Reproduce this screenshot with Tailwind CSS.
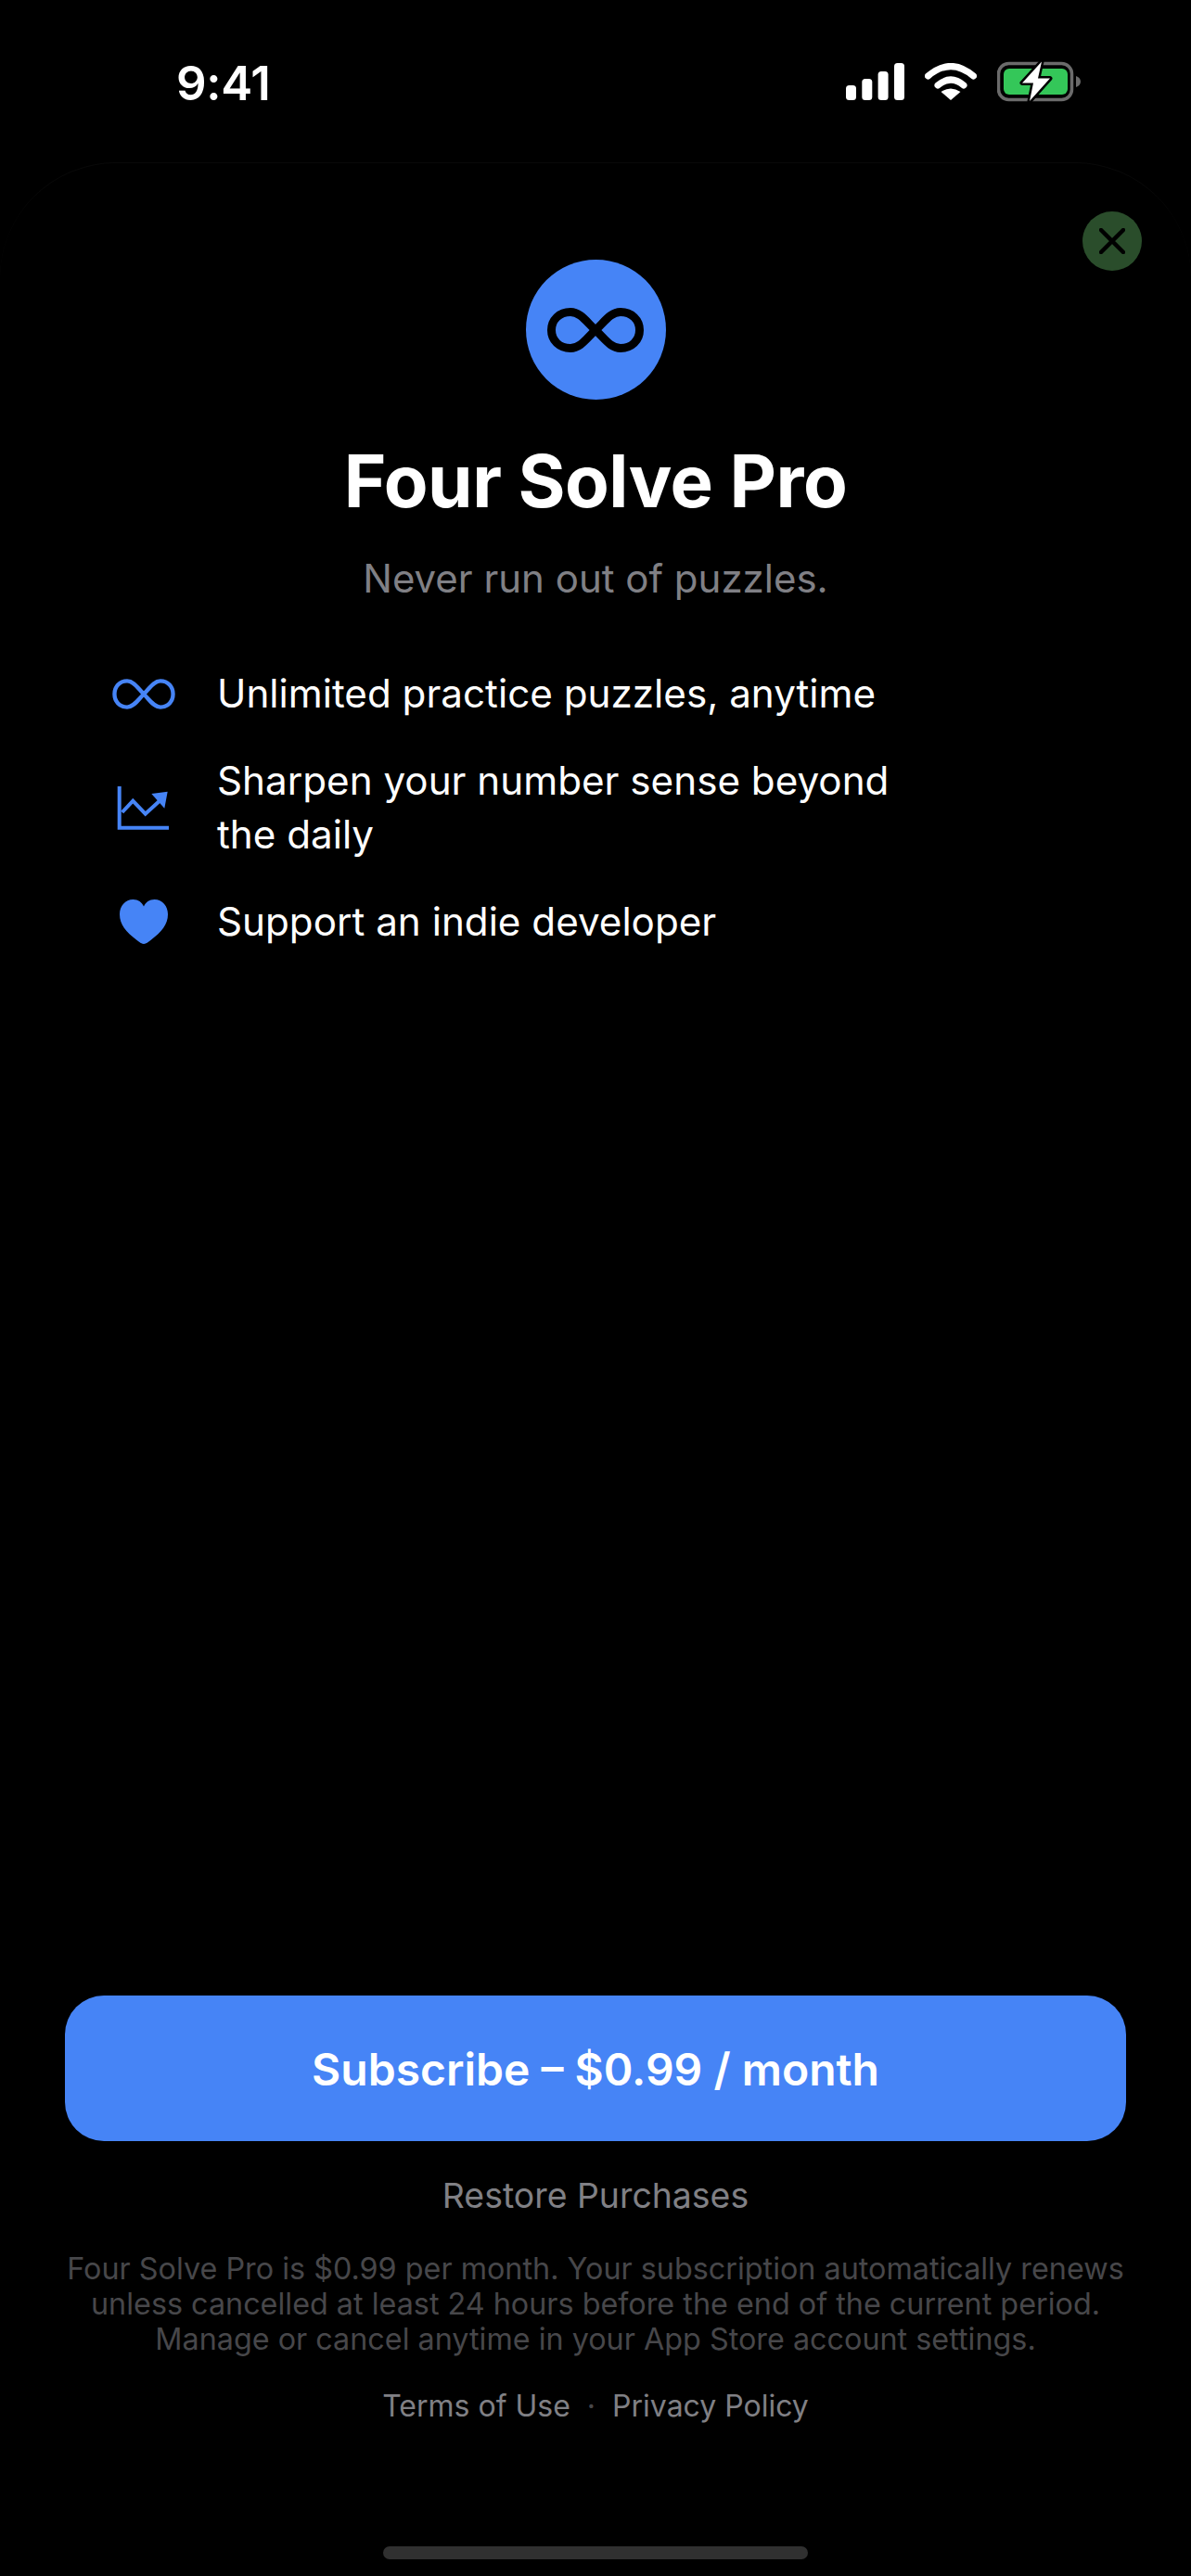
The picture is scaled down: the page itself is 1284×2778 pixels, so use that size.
<!DOCTYPE html>
<html lang="en">
<head>
  <meta charset="UTF-8">
  <meta name="viewport" content="width=device-width, initial-scale=1.0">
  <title>Four Solve Pro</title>
  <script src="https://cdn.jsdelivr.net/npm/@tailwindcss/browser@4"></script>
</head>
<body class="bg-black text-white font-['Inter',sans-serif]">
  <div class="w-[1284px] h-[2778px] flex flex-col overflow-hidden">
    <!-- Status bar -->
    <header class="h-[175px] shrink-0 flex justify-between items-start pl-[190px] pr-[119px] pt-[62px]">
      <span class="text-[51px] leading-[56px] font-semibold tracking-[-0.3px]">9:41</span>
      <div class="flex items-start gap-[22px] pt-[6px]">
        <svg class="w-[63px] h-[40px]" viewBox="0 0 63 40" fill="#fff">
          <rect x="0" y="24" width="11" height="16" rx="3.500"/>
          <rect x="17.300" y="17" width="11" height="23" rx="3.500"/>
          <rect x="34.600" y="9" width="11" height="31" rx="3.500"/>
          <rect x="52" y="0" width="11" height="40" rx="3.500"/>
        </svg>
        <svg class="w-[56px] h-[40px]" viewBox="0 0 56 40" fill="none" stroke="#fff" stroke-width="7" stroke-linecap="round">
          <path d="M3.500 14 Q28 -7 52.500 14"/>
          <path d="M14 24 Q28 12 42 24"/>
          <path d="M28 40 L17.500 31 Q28 24 38.500 31 Z" fill="#fff" stroke="none"/>
        </svg>
        <svg class="w-[90px] h-[46px] -mt-[3px]" viewBox="0 0 90 46" fill="none">
          <rect x="1.500" y="3.500" width="79" height="39" rx="11" stroke="#6b6b6b" stroke-width="3.500"/>
          <rect x="7" y="9" width="69" height="28" rx="6" fill="#34c759"/>
          <path d="M85 17 c3 1 5 3 5 6 s-2 5 -5 6 Z" fill="#6b6b6b"/>
          <path d="M48 1.500 L27 24.500 L39 24.500 L35 44 L57 19.500 L44 19.500 Z" fill="#fff" stroke="#000" stroke-width="5" stroke-linejoin="round" paint-order="stroke"/>
        </svg>
      </div>
    </header>

    <!-- Sheet -->
    <main class="relative flex-1 flex flex-col rounded-t-[125px] border-t border-[#090909]">
      <button class="absolute top-[52px] right-[53px] w-[64px] h-[64px] rounded-full bg-[#2a4d2b] flex items-center justify-center">
        <svg class="w-[28px] h-[28px]" viewBox="0 0 28 28" stroke="#000" stroke-width="4.500" stroke-linecap="round">
          <path d="M2 2 L26 26 M26 2 L2 26"/>
        </svg>
      </button>

      <section class="flex flex-col items-center pt-[104px]">
        <div class="w-[151px] h-[151px] rounded-full bg-[#4684f6] flex items-center justify-center">
          <svg class="w-[104px] h-[48px]" viewBox="0 0 104 48" fill="none" stroke="#000" stroke-width="9">
            <path d="M52 24 C43 16 36 4.500 25 4.500 C13 4.500 4.500 13 4.500 24 C4.500 35 13 43.500 25 43.500 C36 43.500 43 32 52 24 C61 16 68 4.500 79 4.500 C91 4.500 99.500 13 99.500 24 C99.500 35 91 43.500 79 43.500 C68 43.500 61 32 52 24 Z"/>
          </svg>
        </div>
        <h1 class="mt-[42px] text-[78px] leading-[92px] font-bold tracking-[-0.5px]">Four Solve Pro</h1>
        <p class="mt-[33px] text-[42px] leading-[52px] text-[#808085]">Never run out of puzzles.</p>
      </section>

      <ul class="mt-[69px] flex flex-col gap-[36px] pl-[120px] w-[1000px]">
        <li class="flex items-center gap-[44px]">
          <svg class="w-[68px] h-[33px] mx-[1px] shrink-0" viewBox="0 0 70 34" fill="none" stroke="#4684f6" stroke-width="4.500">
            <path d="M35 17 C29 11 24 2.500 16.500 2.500 C8 2.500 2.500 9 2.500 17 C2.500 25 8 31.500 16.500 31.500 C24 31.500 29 23 35 17 C41 11 46 2.500 53.500 2.500 C62 2.500 67.500 9 67.500 17 C67.500 25 62 31.500 53.500 31.500 C46 31.500 41 23 35 17 Z"/>
          </svg>
          <span class="text-[42.200px] leading-[58px]">Unlimited practice puzzles, anytime</span>
        </li>
        <li class="flex items-center gap-[44px]">
          <svg class="w-[70px] h-[50px] shrink-0" viewBox="0 0 70 50" fill="none" stroke="#4684f6" stroke-width="4">
            <path d="M8.700 2 V46.700 H62"/>
            <path d="M11.700 30 L23.300 17.700 L36.700 31.700 L51.700 18"/>
            <path d="M43.300 10 L60.700 7.700 L57.300 25.700 Z" fill="#4684f6" stroke="none"/>
          </svg>
          <span class="text-[42.200px] leading-[58px]">Sharpen your number sense beyond the daily</span>
        </li>
        <li class="flex items-center gap-[44px]">
          <svg class="w-[70px] h-[48px] shrink-0" viewBox="0 0 70 48" fill="#4684f6">
            <path d="M35 48 C33 48 31 46.500 27 43.500 C16 35 9 27 9 16 C9 7 15 0 23.500 0 C29 0 33 3 35 7.500 C37 3 41 0 46.500 0 C55 0 61 7 61 16 C61 27 54 35 43 43.500 C39 46.500 37 48 35 48 Z"/>
          </svg>
          <span class="text-[42.200px] leading-[58px]">Support an indie developer</span>
        </li>
      </ul>

      <!-- Footer -->
      <section class="mt-auto flex flex-col items-center px-[70px] pb-[18px]">
        <button class="w-full h-[157px] pt-[3px] rounded-[42px] bg-[#4684f6] text-[48px] font-semibold">Subscribe – $0.99 / month</button>
        <a class="mt-[36px] text-[37.400px] leading-[46px] text-[#808085]">Restore Purchases</a>
        <p class="mt-[37px] text-[32.350px] leading-[38px] text-[#47474a] text-center whitespace-nowrap">Four Solve Pro is $0.99 per month. Your subscription automatically renews<br>unless cancelled at least 24 hours before the end of the current period.<br>Manage or cancel anytime in your App Store account settings.</p>
        <div class="mt-[32px] flex items-center gap-[18px] text-[32px] leading-[42px] text-[#808085]">
          <a>Terms of Use</a>
          <span class="text-[#47474a]">·</span>
          <a>Privacy Policy</a>
        </div>
        <div class="mt-[130px] w-[458px] h-[14px] rounded-full bg-[#303030]"></div>
      </section>
    </main>
  </div>
</body>
</html>
